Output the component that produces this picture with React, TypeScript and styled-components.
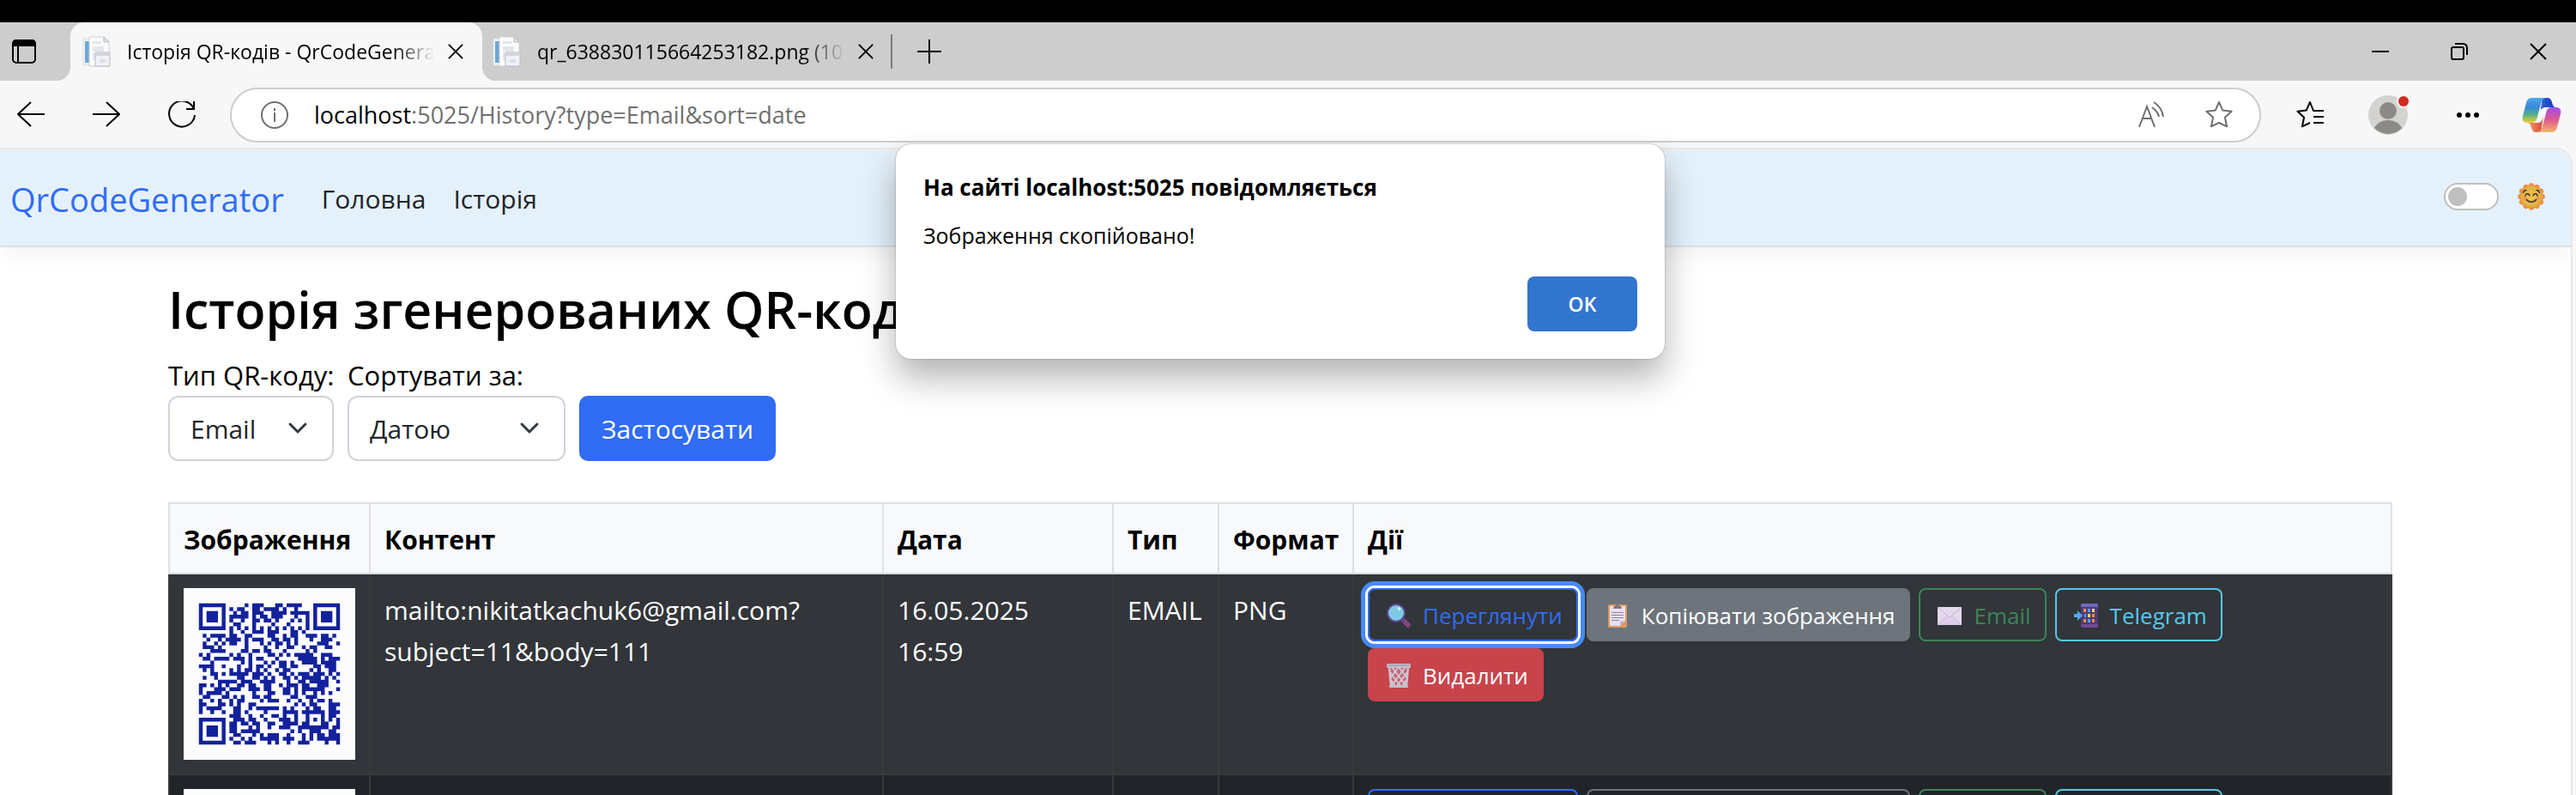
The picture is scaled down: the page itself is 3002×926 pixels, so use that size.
import React from "react";
import styled, { createGlobalStyle, css } from "styled-components";

const GlobalStyle = createGlobalStyle`
  *, *::before, *::after { box-sizing: border-box; }
  body {
    margin: 0;
    background: #f7f7f7;
    color: #000;
    font-family: "Open Sans", "Noto Sans", sans-serif;
    font-size: 30px;
    line-height: 48px;
  }
  button, input, select { font: inherit; color: inherit; }
  h1, h2, p { margin: 0; }
`;

/* ---------- QR code ---------- */

const SIZE = 37;
const FORMAT = 0b010111011011010;
const EC_LENGTH = 18;

function gfMultiply(x: number, y: number) {
  let z = 0;
  for (let i = 7; i >= 0; i--) {
    z = (z << 1) ^ ((z >>> 7) * 0x11d);
    z ^= ((y >>> i) & 1) * x;
  }
  return z;
}

function errorCorrection(data: number[]) {
  const divisor: number[] = Array(EC_LENGTH).fill(0);
  divisor[EC_LENGTH - 1] = 1;
  let root = 1;
  for (let i = 0; i < EC_LENGTH; i++) {
    for (let j = 0; j < EC_LENGTH; j++) {
      divisor[j] = gfMultiply(divisor[j], root);
      if (j + 1 < EC_LENGTH) divisor[j] ^= divisor[j + 1];
    }
    root = gfMultiply(root, 2);
  }
  const result: number[] = Array(EC_LENGTH).fill(0);
  data.forEach((b) => {
    const factor = b ^ (result.shift() as number);
    result.push(0);
    divisor.forEach((d, i) => {
      result[i] ^= gfMultiply(d, factor);
    });
  });
  return result;
}

// Version 5, quality Q: 62 data bytes in blocks of 15, 15, 16 and 16.
function qrPath(text: string) {
  const bits: number[] = [];
  const push = (value: number, length: number) => {
    for (let i = length - 1; i >= 0; i--) bits.push((value >>> i) & 1);
  };
  push(4, 4);
  push(text.length, 8);
  for (const ch of text) push(ch.charCodeAt(0), 8);
  push(0, 4);
  while (bits.length % 8) bits.push(0);
  for (let pad = 0xec; bits.length < 62 * 8; pad ^= 0xec ^ 0x11) push(pad, 8);
  const bytes: number[] = [];
  for (let i = 0; i < bits.length; i += 8) bytes.push(parseInt(bits.slice(i, i + 8).join(""), 2));

  let start = 0;
  const blocks = [15, 15, 16, 16].map((n) => bytes.slice(start, (start += n)));
  const codes = blocks.map(errorCorrection);
  const stream: number[] = [];
  for (let i = 0; i < 16; i++) blocks.forEach((b) => i < b.length && stream.push(b[i]));
  for (let i = 0; i < EC_LENGTH; i++) codes.forEach((c) => stream.push(c[i]));

  const grid: (boolean | null)[][] = Array.from({ length: SIZE }, () => Array(SIZE).fill(null));
  const set = (x: number, y: number, dark: boolean) => {
    if (x >= 0 && y >= 0 && x < SIZE && y < SIZE) grid[y][x] = dark;
  };
  for (let i = 0; i < SIZE; i++) {
    set(6, i, i % 2 === 0);
    set(i, 6, i % 2 === 0);
  }
  [[3, 3], [SIZE - 4, 3], [3, SIZE - 4]].forEach(([cx, cy]) => {
    for (let dy = -4; dy <= 4; dy++)
      for (let dx = -4; dx <= 4; dx++) {
        const d = Math.max(Math.abs(dx), Math.abs(dy));
        set(cx + dx, cy + dy, d !== 2 && d !== 4);
      }
  });
  for (let dy = -2; dy <= 2; dy++)
    for (let dx = -2; dx <= 2; dx++) set(30 + dx, 30 + dy, Math.max(Math.abs(dx), Math.abs(dy)) !== 1);

  const f = (i: number) => ((FORMAT >>> i) & 1) === 1;
  for (let i = 0; i <= 5; i++) set(8, i, f(i));
  set(8, 7, f(6));
  set(8, 8, f(7));
  set(7, 8, f(8));
  for (let i = 9; i < 15; i++) set(14 - i, 8, f(i));
  for (let i = 0; i < 8; i++) set(SIZE - 1 - i, 8, f(i));
  for (let i = 8; i < 15; i++) set(8, SIZE - 15 + i, f(i));
  set(8, SIZE - 8, true);

  let n = 0;
  for (let right = SIZE - 1; right >= 1; right -= 2) {
    if (right === 6) right = 5;
    for (let v = 0; v < SIZE; v++)
      for (let j = 0; j < 2; j++) {
        const x = right - j;
        const y = ((right + 1) & 2) === 0 ? SIZE - 1 - v : v;
        if (grid[y][x] !== null) continue;
        const bit = n < stream.length * 8 ? (stream[n >>> 3] >>> (7 - (n & 7))) & 1 : 0;
        n++;
        const mask = (((x * y) % 2) + ((x * y) % 3)) % 2 === 0;
        grid[y][x] = (bit === 1) !== mask;
      }
  }
  let d = "";
  grid.forEach((row, y) => row.forEach((dark, x) => { if (dark) d += `M${x + 4} ${y + 4}h1v1h-1z`; }));
  return d;
}

const QrImage = styled.svg`
  display: block;
  width: 200px;
  height: 200px;
  background: #fcfcfc;
`;

const QrCode = ({ text }: { text: string }) => (
  <QrImage viewBox="0 0 45 45" role="img" aria-label="QR">
    <path d={qrPath(text)} fill="#13229c" />
  </QrImage>
);

/* ---------- Icons ---------- */

const Icon = styled.svg<{ $w?: number; $h?: number; $solid?: boolean }>`
  display: block;
  flex: none;
  width: ${(p) => p.$w ?? 32}px;
  height: ${(p) => p.$h ?? p.$w ?? 32}px;
  fill: none;
  stroke: ${(p) => (p.$solid ? "none" : "currentColor")};
  stroke-width: 2;
`;

const Favicon = () => (
  <Icon $w={34} $h={36} viewBox="0 0 34 36" $solid>
    <path d="M2 3h14v31H2z" fill="#f4f8fb" stroke="#d5dce2" strokeWidth="1" />
    <path d="M4 6h7v25H4z" fill="#6fa5d8" />
    <path d="M9 1h17l6 6v28H9z" fill="#fbfbfc" stroke="#d0d2d4" strokeWidth="1" />
    <path d="M26 1v6h6z" fill="#e3e5e6" stroke="#b5b7b9" strokeWidth="1" />
    <path d="M13 6h10v3H13zM13 12h13v6H13zM13 20h5v8h-5z" fill="#e3e7ec" />
    <path d="M16 19h17v16H16z" fill="#f1f2f7" stroke="#b6b9c2" strokeWidth="1" />
    <path d="M17 20h15v3H17z" fill="#d3d5dc" />
    <path d="M21 27h7v4h-7z" fill="#dcdfe8" />
  </Icon>
);

const CloseIcon = ({ size }: { size: number }) => (
  <Icon $w={size} viewBox="0 0 20 20"><path d="M1 1l18 18M19 1L1 19" /></Icon>
);

const starPath = "M16 1l4.3 9.6 10.3 1.1-7.7 7 2.2 10.6L16 25l-9.1 4.3 2.2-10.6-7.7-7 10.3-1.1z";

const Copilot = () => (
  <Icon $w={46} $h={42} viewBox="0 0 46 42" $solid>
    <defs>
      <linearGradient id="cpLeft" x1="0" y1="0" x2="0" y2="1">
        <stop offset="0" stopColor="#4fa9f0" /><stop offset=".35" stopColor="#3a86dc" />
        <stop offset=".65" stopColor="#4fae92" /><stop offset="1" stopColor="#f0cf2e" />
      </linearGradient>
      <linearGradient id="cpRight" x1="0" y1="0" x2="0" y2="1">
        <stop offset="0" stopColor="#a24fe6" /><stop offset=".5" stopColor="#dd5a92" />
        <stop offset="1" stopColor="#f6b563" />
      </linearGradient>
      <linearGradient id="cpTop" x1="0" y1="0" x2="1" y2="0">
        <stop offset="0" stopColor="#2d63dc" /><stop offset="1" stopColor="#1533b8" />
      </linearGradient>
      <linearGradient id="cpBottom" x1="0" y1="0" x2="1" y2="0">
        <stop offset="0" stopColor="#f3a06b" /><stop offset="1" stopColor="#d9483f" />
      </linearGradient>
    </defs>
    <path d="M24 1h5c4 0 5 2 6 5 1 4 2 6 5 6H27c-4 0-5 4-6 8z" fill="url(#cpTop)" />
    <path d="M22 41h-5c-4 0-5-2-6-5-1-4-2-6-5-6h13c4 0 5-4 6-8z" fill="url(#cpBottom)" />
    <path d="M12 1h17c-4 0-6 3-7 7l-4 15c-1 5-3 7-7 7H6c-5 0-6-4-5-8L5 7c1-4 3-6 7-6z" fill="url(#cpLeft)" />
    <path d="M34 41H17c4 0 6-3 7-7l4-15c1-5 3-7 7-7h5c5 0 6 4 5 8l-4 15c-1 4-3 6-7 6z" fill="url(#cpRight)" />
    <path d="M28 13h-2c-3 0-5 2-6 5l-3 11c3-1 5-3 6-6l2-6c1-2 2-3 3-4z" fill="#f7f7f7" />
  </Icon>
);

const Sun = () => (
  <Icon $w={32} viewBox="0 0 32 32" $solid>
    <defs>
      <radialGradient id="sunFace"><stop offset="0" stopColor="#f0c94f" /><stop offset="1" stopColor="#dfae41" /></radialGradient>
    </defs>
    <g fill="#ec8f45">
      {[0, 30, 60, 90, 120, 150, 180, 210, 240, 270, 300, 330].map((a) => (
        <circle key={a} cx="16" cy="3.5" r="3.3" transform={`rotate(${a} 16 16)`} />
      ))}
      <circle cx="16" cy="16" r="13.5" />
    </g>
    <circle cx="16" cy="16" r="12.5" fill="url(#sunFace)" />
    <circle cx="8.5" cy="18" r="2.5" fill="#ee9a4e" />
    <circle cx="23.5" cy="18" r="2.5" fill="#ee9a4e" />
    <path d="M9 15c.5-3 4.5-3 5 0M18 15c.5-3 4.5-3 5 0M10.5 19.5c2.5 3.5 8.5 3.5 11 0" stroke="#43303d" strokeWidth="1.5" strokeLinecap="round" />
    <path d="M6.500 11.500c.5-2 2-3 3.500-3M25.500 11.500c-.5-2-2-3-3.500-3" stroke="#43303d" strokeWidth="1.3" strokeLinecap="round" />
  </Icon>
);

const Magnifier = () => (
  <Icon $w={28} viewBox="0 0 28 28" $solid>
    <path d="M20 20l5 5" stroke="#7d4687" strokeWidth="5.5" strokeLinecap="round" />
    <path d="M17 17l4 4" stroke="#5b4a8c" strokeWidth="3" />
    <circle cx="11" cy="11" r="10" fill="#7fcbe6" stroke="#5a4687" strokeWidth="2" />
    <circle cx="14.5" cy="6" r="1.8" fill="#dff3fb" />
  </Icon>
);

const Clipboard = () => (
  <Icon $w={28} viewBox="0 0 28 28" $solid>
    <rect x="3" y="1" width="22" height="27" rx="1.5" fill="#dd9a60" />
    <path d="M5 3h18v17l-6 6H5z" fill="#e9e1f1" />
    <path d="M17 26v-5l6-1z" fill="#bdb0cc" />
    <path d="M9 6c0-3 2-3 3-4 0-2 4-2 4 0 1 1 3 1 3 4z" fill="#85737f" />
    <path d="M7 10.5h14M7 13.5h14M7 16.5h14M7 19.5h9" stroke="#8c7fa0" strokeWidth="1" />
  </Icon>
);

const Envelope = () => (
  <Icon $w={28} viewBox="0 0 28 28" $solid>
    <rect x="0" y="4" width="28" height="21" rx="1" fill="#e4d9ec" />
    <path d="M0 24l11-10 3 2 3-2 11 10v1H0z" fill="#dccdea" />
    <path d="M1 5l11.5 10c1 .8 2 .8 3 0L27 5" stroke="#c4aed3" strokeWidth="1" />
    <path d="M1 24l10-9M27 24l-10-9" stroke="#cdbbdc" strokeWidth="1" />
  </Icon>
);

const PhoneArrow = () => (
  <Icon $w={28} viewBox="0 0 28 28" $solid>
    <rect x="8" y="0" width="20" height="28" rx="2" fill="#4c3b78" />
    <path d="M8 4V2a2 2 0 012-2h16a2 2 0 012 2v2z" fill="#6d6bb8" />
    <path d="M8 24h20v2a2 2 0 01-2 2H10a2 2 0 01-2-2z" fill="#6f4a97" />
    <path d="M11 6h3v4h-3zM21 12h3v4h-3zM11 18h3v4h-3zM21 18h3v4h-3z" fill="#f48a4c" />
    <path d="M16 6h3v4h-3zM12 12h2v4h-2zM16 18h3v4h-3z" fill="#4ea4ee" />
    <path d="M21 6h3v4h-3zM16 12h3v4h-3z" fill="#f7d854" />
    <path d="M0 12h4V8l6 6-6 6v-4H0z" fill="#52a8f2" />
  </Icon>
);

const Trash = () => (
  <Icon $w={28} viewBox="0 0 28 28" $solid>
    <path d="M2 4l3 22h18l3-22z" fill="#b9aebf" fillOpacity=".35" />
    <path d="M3 4l2 22M25 4l-2 22" stroke="#c9c3d0" strokeWidth="2.5" />
    <path d="M4 10l12 16M6 4l16 21M14 4l10 13M5 19l5 7M24 10L12 26M22 4L6 25M14 4L4 17M23 19l-5 7" stroke="#d2cbd8" strokeWidth="1.8" />
    <rect x="0" y="0" width="28" height="5" rx="1.5" fill="#c3bdc9" />
    <path d="M2 2h24" stroke="#958c9c" strokeWidth="1" />
    <rect x="3" y="25" width="22" height="3" rx="1" fill="#c3bdc9" />
  </Icon>
);

/* ---------- Browser frame ---------- */

const Screen = styled.div`
  display: flex;
  flex-direction: column;
  height: 100vh;
  overflow: hidden;
  border-top: 26px solid #000;
`;

const TabStrip = styled.div`
  display: flex;
  align-items: stretch;
  flex: none;
  height: 68px;
  background: #cdcdcd;
`;

const PlainButton = styled.button<{ $width?: number }>`
  display: flex;
  align-items: center;
  justify-content: center;
  flex: none;
  width: ${(p) => (p.$width ? `${p.$width}px` : "auto")};
  padding: 0;
  border: 0;
  background: none;
`;

const Tab = styled.div<{ $active?: boolean }>`
  position: relative;
  display: flex;
  align-items: center;
  flex: none;
  width: ${(p) => (p.$active ? 480 : 458)}px;
  margin-left: ${(p) => (p.$active ? 26 : 0)}px;
  padding: ${(p) => (p.$active ? "0 22px 0 13px" : "0 2px 0 11px")};
  ${(p) =>
    p.$active &&
    css`
      border-radius: 16px 16px 0 0;
      background: #f7f7f7;
      &::before, &::after {
        content: "";
        position: absolute;
        bottom: 0;
        width: 16px;
        height: 16px;
      }
      &::before {
        right: 100%;
        background: radial-gradient(circle at 0 0, #cdcdcd 16px, #f7f7f7 16px);
      }
      &::after {
        left: 100%;
        background: radial-gradient(circle at 100% 0, #cdcdcd 16px, #f7f7f7 16px);
      }
    `}
`;

const TabTitle = styled.button`
  display: flex;
  align-items: center;
  gap: 19px;
  flex: 1;
  min-width: 0;
  margin-right: 16px;
  padding: 0;
  border: 0;
  background: none;
  font-size: 23px;
  line-height: 32px;
`;

const TabText = styled.span`
  flex: 1;
  overflow: hidden;
  text-align: left;
  white-space: nowrap;
  mask-image: linear-gradient(90deg, #000 calc(100% - 48px), transparent);
`;

const TabDivider = styled.span`
  align-self: center;
  width: 2px;
  height: 40px;
  margin: 0 29px 0 18px;
  background: #7b7b7b;
`;

const WindowControls = styled.div`
  display: flex;
  gap: 4px;
  margin-left: auto;
`;

const Toolbar = styled.div`
  display: flex;
  align-items: center;
  flex: none;
  height: 78px;
  padding: 2px 0 0 20px;
  background: #f7f7f7;
`;

const NavButtons = styled.div`
  display: flex;
  gap: 56px;
  margin-right: 40px;
`;

const AddressBar = styled.div`
  display: flex;
  align-items: center;
  flex: 1;
  height: 64px;
  padding: 0 31px 0 34px;
  border: 2px solid #cdcdcd;
  border-radius: 32px;
  background: #fff;
  color: #6f6f6f;
  font-size: 27px;
`;

const Host = styled.label`
  margin-left: 30px;
  color: #000;
`;

const AddressInput = styled.input`
  flex: 1;
  min-width: 0;
  padding: 0;
  border: 0;
  outline: 0;
  background: none;
`;

const AddressActions = styled.div`
  display: flex;
  gap: 47px;
`;

const BrowserActions = styled.div`
  display: flex;
  align-items: center;
  margin-left: 11px;
`;

const Viewport = styled.div`
  display: flex;
  flex-direction: column;
  flex: 1;
  min-height: 0;
  margin-right: 4px;
  overflow: hidden;
  border: 2px solid #e8e8e8;
  border-width: 2px 2px 0 0;
  border-radius: 0 20px 0 0;
  background: #fff;
`;

/* ---------- Page ---------- */

const Navbar = styled.nav`
  display: flex;
  align-items: center;
  flex: none;
  height: 114px;
  padding: 0 30px 0 12px;
  border-bottom: 2px solid #dce0e4;
  background: #e4f1fb;
  box-shadow: 0 8px 24px rgba(0, 0, 0, 0.05);
  color: #212529;
`;

const Brand = styled.a`
  margin-right: 44px;
  padding-top: 4px;
  color: #316cf4;
  font-size: 38px;
  text-decoration: none;
`;

const NavLink = styled.a`
  margin-right: 32px;
  padding-top: 4px;
  color: #212529;
  text-decoration: none;
`;

const ThemeSwitch = styled.label`
  display: flex;
  align-items: center;
  gap: 22px;
  margin-left: auto;
  padding-bottom: 3px;
`;

const SwitchInput = styled.input`
  display: flex;
  align-items: center;
  width: 64px;
  height: 32px;
  margin: 0;
  padding: 0 3px;
  border: 2px solid #bfbfbf;
  border-radius: 16px;
  background: #fff;
  appearance: none;
  &::before {
    content: "";
    width: 22px;
    height: 22px;
    border-radius: 50%;
    background: #bfbfbf;
  }
`;

const Main = styled.main`
  width: 100%;
  max-width: 2604px;
  margin: 0 auto;
  padding: 34px 12px 0 0;
`;

const Title = styled.h1`
  margin-bottom: 15px;
  font-size: 59px;
  font-weight: 600;
  line-height: 76px;
`;

const Filters = styled.form`
  display: flex;
  align-items: flex-end;
  gap: 16px;
  margin-bottom: 48px;
`;

const Field = styled.div<{ $width: number }>`
  width: ${(p) => p.$width}px;
`;

const FieldLabel = styled.label`
  display: block;
  font-size: 31px;
  white-space: nowrap;
`;

const SelectBox = styled.div`
  position: relative;
  svg {
    position: absolute;
    top: 26px;
    right: 30px;
    pointer-events: none;
  }
`;

const Select = styled.select`
  display: block;
  width: 100%;
  height: 76px;
  padding: 2px 24px 0;
  border: 2px solid #ced4da;
  border-radius: 12px;
  background: #fff;
  color: #212529;
  appearance: none;
`;

const ApplyButton = styled.button`
  height: 76px;
  padding: 2px 26px 0;
  border: 0;
  border-radius: 10px;
  background: #316cf4;
  color: #fff;
`;

const Table = styled.table`
  width: 100%;
  border-collapse: collapse;
  table-layout: fixed;
`;

const Col = styled.col<{ $width?: number }>`
  width: ${(p) => (p.$width ? `${p.$width}px` : "auto")};
`;

const HeadCell = styled.th`
  padding: 18px 16px 14px;
  border: 2px solid #dee0e2;
  background: #f8f9fb;
  font-weight: 700;
  text-align: left;
`;

const Cell = styled.td<{ $hovered?: boolean }>`
  padding: 16px;
  border: 2px solid #373b3e;
  border-top-width: ${(p) => (p.$hovered ? 0 : 2)}px;
  background: ${(p) => (p.$hovered ? "#323539" : "#212529")};
  color: #fff;
  vertical-align: top;
`;

const TextCell = styled(Cell)`
  padding-top: 18px;
`;

const Actions = styled.div`
  display: flex;
  flex-wrap: wrap;
  gap: 8px 10px;
`;

const filled = { copy: "#6d747c", remove: "#c9434b" };

const ActionButton = styled.button<{ $color: string; $fill?: boolean; $focused?: boolean }>`
  display: flex;
  align-items: center;
  gap: 14px;
  height: 62px;
  padding: 2px 16px 0 20px;
  border: 2px solid ${(p) => p.$color};
  border-radius: 8px;
  background: ${(p) => (p.$fill ? p.$color : "transparent")};
  color: ${(p) => (p.$fill ? "#fff" : p.$color)};
  font-size: 26px;
  line-height: 42px;
  white-space: nowrap;
  ${(p) => p.$focused && css`box-shadow: 0 0 0 3px #fff, 0 0 0 8px #468af7;`}
`;

/* ---------- Alert ---------- */

const AlertLayer = styled.div`
  position: absolute;
  inset: 168px 18px auto 0;
  display: flex;
  justify-content: center;
`;

const Alert = styled.div`
  display: flex;
  flex-direction: column;
  width: 896px;
  padding: 26px 32px 32px;
  border-radius: 18px;
  background: #fff;
  box-shadow: 0 0 2px rgba(0, 0, 0, 0.35), 0 22px 40px rgba(0, 0, 0, 0.3);
`;

const AlertTitle = styled.h2`
  margin-bottom: 16px;
  font-size: 26px;
  font-weight: 700;
  line-height: 48px;
`;

const AlertText = styled.p`
  margin-bottom: 32px;
  font-size: 25px;
  line-height: 32px;
`;

const OkButton = styled.button`
  align-self: flex-end;
  width: 128px;
  height: 64px;
  border: 0;
  border-radius: 8px;
  background: #3275ce;
  color: #fff;
  font-size: 23px;
  font-weight: 600;
`;

const mailto = "mailto:nikitatkachuk6@gmail.com?subject=11&body=111";

const Row = ({ hovered }: { hovered?: boolean }) => (
  <tr>
    <Cell $hovered={hovered}><QrCode text={mailto} /></Cell>
    <TextCell $hovered={hovered}>mailto:nikitatkachuk6@gmail.com?<wbr />subject=11&amp;body=111</TextCell>
    <TextCell $hovered={hovered}>16.05.2025<br />16:59</TextCell>
    <TextCell $hovered={hovered}>EMAIL</TextCell>
    <TextCell $hovered={hovered}>PNG</TextCell>
    <Cell $hovered={hovered}>
      <Actions>
        <ActionButton $color="#316cf4" $focused={hovered}><Magnifier />Переглянути</ActionButton>
        <ActionButton $color={filled.copy} $fill={hovered}><Clipboard />Копіювати зображення</ActionButton>
        <ActionButton $color="#3c8558"><Envelope />Email</ActionButton>
        <ActionButton $color="#55c8ee"><PhoneArrow />Telegram</ActionButton>
        <ActionButton $color={filled.remove} $fill><Trash />Видалити</ActionButton>
      </Actions>
    </Cell>
  </tr>
);

const Chevron = () => (
  <Icon $w={24} viewBox="0 0 24 24" strokeLinecap="round" strokeLinejoin="round">
    <path d="M3 7l9 9 9-9" stroke="#343a40" strokeWidth="3" />
  </Icon>
);

export default function App() {
  return (
    <Screen>
      <GlobalStyle />
      <TabStrip>
        <PlainButton $width={56} aria-label="Tab actions">
          <Icon $w={28} viewBox="0 0 28 28">
            <rect x="1" y="1" width="26" height="26" rx="4" />
            <path d="M1 7V5a4 4 0 014-4h18a4 4 0 014 4v2z" fill="currentColor" />
            <path d="M7 8v19" />
          </Icon>
        </PlainButton>
        <Tab $active>
          <TabTitle role="tab" aria-selected="true"><Favicon /><TabText>Історія QR-кодів - QrCodeGenerator</TabText></TabTitle>
          <PlainButton aria-label="Close tab"><CloseIcon size={18} /></PlainButton>
        </Tab>
        <Tab>
          <TabTitle role="tab" aria-selected="false"><Favicon /><TabText>qr_638830115664253182.png (1000×1000)</TabText></TabTitle>
          <PlainButton aria-label="Close tab"><CloseIcon size={18} /></PlainButton>
        </Tab>
        <TabDivider />
        <PlainButton aria-label="New tab">
          <Icon $w={28} viewBox="0 0 28 28"><path d="M14 0v28M0 14h28" /></Icon>
        </PlainButton>
        <WindowControls>
          <PlainButton $width={88} aria-label="Minimize">
            <Icon $w={20} viewBox="0 0 20 20"><path d="M0 10h20" /></Icon>
          </PlainButton>
          <PlainButton $width={88} aria-label="Restore">
            <Icon $w={20} viewBox="0 0 20 20">
              <rect x="1" y="5" width="14" height="14" rx="2" />
              <path d="M5 1h9c3 0 5 2 5 5v8" />
            </Icon>
          </PlainButton>
          <PlainButton $width={88} aria-label="Close"><CloseIcon size={20} /></PlainButton>
        </WindowControls>
      </TabStrip>
      <Toolbar>
        <NavButtons>
          <PlainButton aria-label="Back">
            <Icon viewBox="0 0 32 32"><path d="M32 15H1M16 1L1 15l15 14" /></Icon>
          </PlainButton>
          <PlainButton aria-label="Forward">
            <Icon viewBox="0 0 32 32"><path d="M0 15h31M16 1l15 14-15 14" /></Icon>
          </PlainButton>
          <PlainButton aria-label="Refresh">
            <Icon viewBox="0 0 32 32"><path d="M30 9A15 15 0 1031 16M30 0v9h-9" /></Icon>
          </PlainButton>
        </NavButtons>
        <AddressBar>
          <Icon viewBox="0 0 32 32"><circle cx="16" cy="16" r="15" /><path d="M16 13v11M16 8v3" /></Icon>
          <Host htmlFor="address">localhost</Host>
          <AddressInput id="address" defaultValue=":5025/History?type=Email&sort=date" />
          <AddressActions>
            <PlainButton aria-label="Read aloud">
              <Icon viewBox="0 0 32 32"><path d="M2 30L11 6l9 24M6 20h11M19 1c6 4 10 10 11 17M17 7c4 3 7 7 8 11" /></Icon>
            </PlainButton>
            <PlainButton aria-label="Favorite">
              <Icon viewBox="0 0 32 32"><path d={starPath} strokeLinejoin="round" /></Icon>
            </PlainButton>
          </AddressActions>
        </AddressBar>
        <BrowserActions>
          <PlainButton $width={92} aria-label="Favorites">
            <Icon viewBox="0 0 32 32">
              <path d="M21 11h-1L16 1l-4.3 9.6L1.4 11.7l7.7 7-2.2 10.6L16 25M20 11h12M20 18h12M20 25h12" strokeLinejoin="round" />
            </Icon>
          </PlainButton>
          <PlainButton $width={92} aria-label="Profile">
            <Icon $w={48} viewBox="0 0 48 48" $solid>
              <defs><clipPath id="face"><circle cx="23" cy="24" r="22" /></clipPath></defs>
              <circle cx="23" cy="24" r="23" fill="#d4d3d1" />
              <g fill="#8b8a87" clipPath="url(#face)">
                <circle cx="23" cy="19" r="10" />
                <ellipse cx="23" cy="44" rx="17" ry="14" />
              </g>
              <circle cx="41" cy="8" r="8" fill="#f7f7f7" />
              <circle cx="41" cy="8" r="6" fill="#cf2a20" />
            </Icon>
          </PlainButton>
          <PlainButton $width={92} aria-label="Settings">
            <Icon $w={26} viewBox="0 0 26 26" $solid>
              <g fill="#000"><circle cx="3" cy="13" r="3" /><circle cx="13" cy="13" r="3" /><circle cx="23" cy="13" r="3" /></g>
            </Icon>
          </PlainButton>
          <PlainButton $width={80} aria-label="Copilot"><Copilot /></PlainButton>
        </BrowserActions>
      </Toolbar>
      <Viewport>
        <Navbar>
          <Brand href="#">QrCodeGenerator</Brand>
          <NavLink href="#">Головна</NavLink>
          <NavLink href="#">Історія</NavLink>
          <ThemeSwitch>
            <SwitchInput type="checkbox" role="switch" aria-label="Theme" />
            <Sun />
          </ThemeSwitch>
        </Navbar>
        <Main>
          <Title>Історія згенерованих QR-кодів</Title>
          <Filters>
            <Field $width={193}>
              <FieldLabel htmlFor="type">Тип QR-коду:</FieldLabel>
              <SelectBox><Select id="type"><option>Email</option></Select><Chevron /></SelectBox>
            </Field>
            <Field $width={254}>
              <FieldLabel htmlFor="sort">Сортувати за:</FieldLabel>
              <SelectBox><Select id="sort"><option>Датою</option></Select><Chevron /></SelectBox>
            </Field>
            <ApplyButton type="button">Застосувати</ApplyButton>
          </Filters>
          <Table>
            <colgroup>
              <Col $width={234} /><Col $width={598} /><Col $width={268} />
              <Col $width={123} /><Col $width={157} /><Col />
            </colgroup>
            <thead>
              <tr>
                <HeadCell>Зображення</HeadCell><HeadCell>Контент</HeadCell><HeadCell>Дата</HeadCell>
                <HeadCell>Тип</HeadCell><HeadCell>Формат</HeadCell><HeadCell>Дії</HeadCell>
              </tr>
            </thead>
            <tbody>
              <Row hovered />
              <Row />
            </tbody>
          </Table>
        </Main>
      </Viewport>
      <AlertLayer>
        <Alert role="alertdialog" aria-labelledby="alert-title">
          <AlertTitle id="alert-title">На сайті localhost:5025 повідомляється</AlertTitle>
          <AlertText>Зображення скопійовано!</AlertText>
          <OkButton>OK</OkButton>
        </Alert>
      </AlertLayer>
    </Screen>
  );
}
